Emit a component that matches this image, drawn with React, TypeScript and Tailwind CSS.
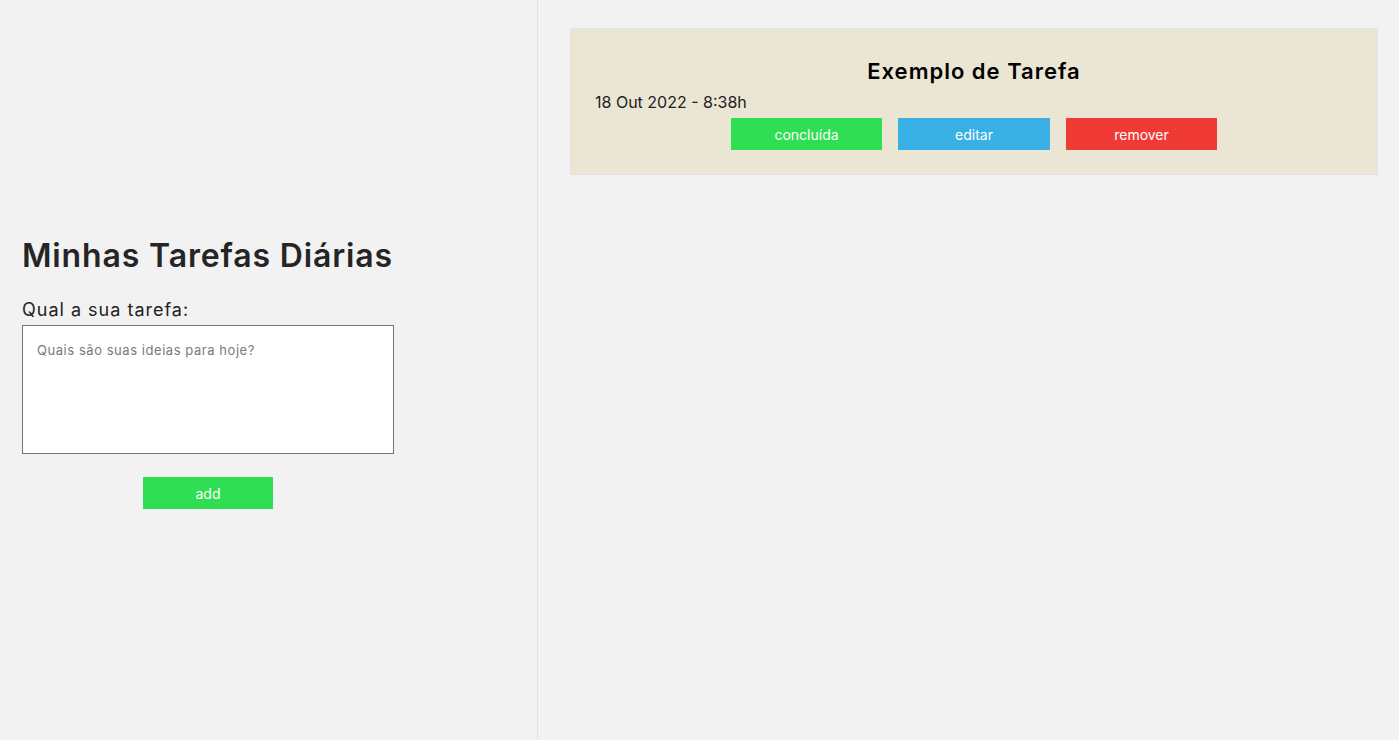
const font = { fontFamily: '"Inter", "Noto Sans", sans-serif' };

export default function App() {
  return (
    <div className="flex h-[740px] w-full bg-[#f2f2f2] text-[#222]" style={font}>
      {/* left form */}
      <section className="flex w-[538px] shrink-0 flex-col border-r border-[#e2e2e2] pl-[22px] pt-[236px]">
        <h1 className="text-[32px] font-semibold leading-[40px] tracking-[0.85px] text-[#252525]">Minhas Tarefas Diárias</h1>
        <label className="mt-[22px] text-[18px] leading-[24px] tracking-[1px] text-[#222]">Qual a sua tarefa:</label>
        <div className="flex w-[372px] flex-col items-center">
          <textarea
            placeholder="Quais são suas ideias para hoje?"
            className="mt-[3px] h-[129px] w-[372px] resize-none border border-[#767676] bg-white px-[14px] py-[14px] text-[13px] leading-[20px] tracking-[0.55px] outline-none placeholder:text-[#7a7a7a]"
          />
          <button className="mt-[23px] h-[32px] w-[130px] bg-[#2fde53] text-[14px] text-white">add</button>
        </div>
      </section>

      {/* task list */}
      <main className="flex-1 pt-[28px] pl-[32px] pr-[21px]">
        <div className="flex flex-col border border-[#e3e3e3] bg-[#ebe5d3] px-[24px] pt-[28px] pb-[24px]">
          <h2 className="text-center text-[22px] font-semibold leading-[28px] tracking-[1px] text-black">Exemplo de Tarefa</h2>
          <p className="mt-[7px] text-[16px] leading-[20px] text-[#222]">18 Out 2022 - 8:38h</p>
          <div className="mt-[6px] flex justify-center gap-[16px]">
            <button className="h-[32px] w-[151px] bg-[#2fde53] text-[14px] text-white">concluída</button>
            <button className="h-[32px] w-[152px] bg-[#38b0e3] text-[14px] text-white">editar</button>
            <button className="h-[32px] w-[151px] bg-[#ef3a36] text-[14px] text-white">remover</button>
          </div>
        </div>
      </main>
    </div>
  );
}
